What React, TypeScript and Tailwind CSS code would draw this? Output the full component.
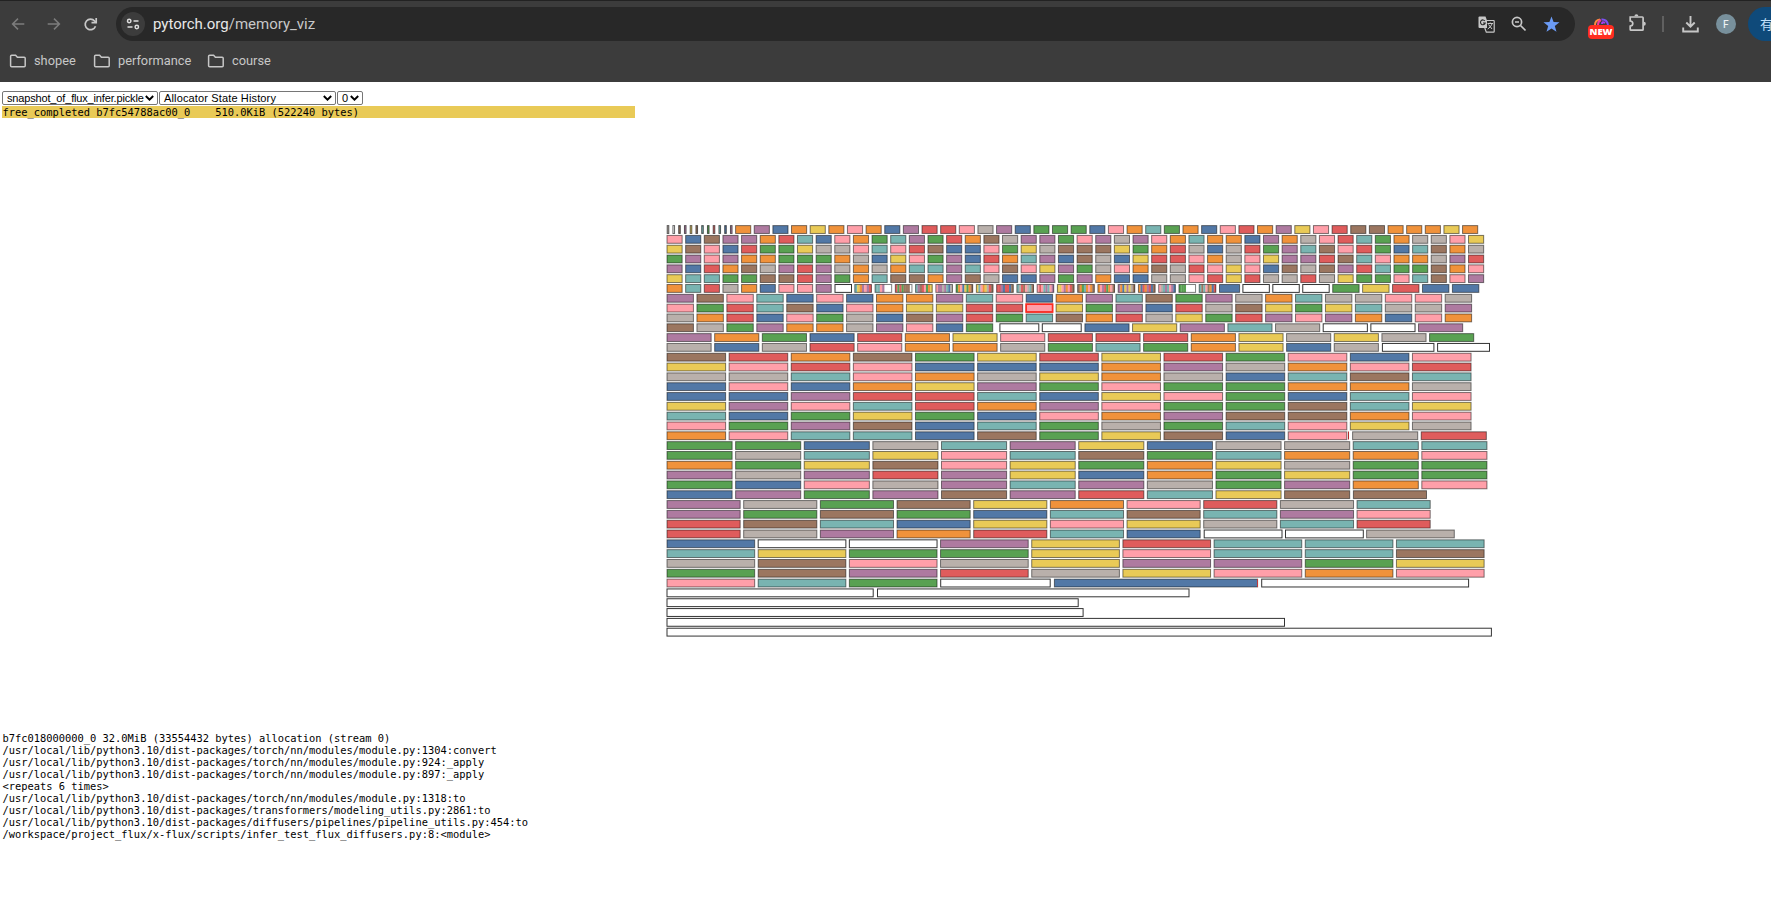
import React from "react";

const PALETTE: Record<string, string> = {
  B: "#5278a6",
  O: "#f0923b",
  R: "#df5c5c",
  T: "#79b4b1",
  G: "#59a152",
  Y: "#e9ca57",
  P: "#ae7aa0",
  K: "#ff9fa9",
  N: "#9b7660",
  A: "#b9b0ab",
  W: "#ffffff",
};

const X0 = 667;
const Y0 = 225.6;
const ROW = 9.82;
const HEIGHT = 7.86;
const GAP = 3.5;

// One run of equally sized blocks: [row, start x, pitch, colours]
type Run = [number, number, number, string];

const S = 18.64;
const M = 29.93;
const L = 47.66;
const XL = 62.12;
const X2 = 68.62;
const X3 = 76.67;
const X4 = 91.18;

const RUNS: Run[] = [
  [0, 735.6, S, "OPBOYOKOBPRRKAPBGGGBKOTGOBKROPYKRNNOOOYO"],
  [1, X0, S, "KBNPPORTBKOGTPGRONAPPGKPAPKOTOOBPOAKRTGOAAKY"],
  [2, X0, S, "YNKBRGGYAAKTKRNBBKGYANNNYGORABARGPTNKRGBTNOA"],
  [3, X0, S, "GPKPOOGGGOABYKGPBROTPBNABYRRKOAKYPPRNTKOOAPR"],
  [4, X0, S, "PBRONAPRPAOAOTTPTKNKYPGAKONARKYKBNANPRTGGNOK"],
  [5, X0, S, "YTTGGNNRPGOTNNOPNABBPGPOBBAAKRYRAARAYGGKTNKP"],
  [6, X0, S, "OTRAOBKKP"],
  [6, 835, 20, "W"],
  [6, 1219.5, 23.6, "B"],
  [6, 1242.9, M, "WWWGYRBB"],
  [7, X0, M, "PNKTBKBOOPTKBOPTNGPAOTAAKKA"],
  [8, X0, M, "KGRTNBKOYYRRKYGPBRANYGYTAAP"],
  [9, X0, M, "AORBKGABNPRGTNORAYGRPKPOBKO"],
  [10, X0, M, "NAGPOOAPKBG"],
  [10, 999.9, 42.4, "WW"],
  [10, 1084.9, L, "BYPTAWWP"],
  [11, X0, L, "POGBROYKRRROYAYAG"],
  [12, X0, L, "ABARKOOAGTGOYBA"],
  [12, 1382.4, 55, "W"],
  [12, 1437.6, 55.4, "W"],
  [13, X0, XL, "NRONGYRYRGKBK"],
  [14, X0, XL, "YKRKBBBOPAOKR"],
  [15, X0, XL, "AATKOAYOABTNT"],
  [16, X0, XL, "BKBOYPGKGGOOA"],
  [17, X0, XL, "BBPRRTBYKGBTK"],
  [18, X0, XL, "YPKTROPKGGNTY"],
  [19, X0, XL, "TBGYGBKOPNNOK"],
  [20, X0, XL, "KGPNBTGAGTKYA"],
  [21, X0, XL, "OKTTBNGYNBK"],
  [21, 1352.6, X2, "AR"],
  [22, X0, X2, "GGBATPYBAATT"],
  [23, X0, X2, "GATYKTNGTOOK"],
  [24, X0, X2, "OGYNKYGOYAGG"],
  [25, X0, X2, "PAPRPYBOGYGG"],
  [26, X0, X2, "GBKAPTPAGPOK"],
  [27, X0, X2, "BPGPNPRTYN"],
  [27, 1353.4, 76.6, "N"],
  [28, X0, X3, "PAGNYOKRAT"],
  [29, X0, X3, "PGNGBTNTPK"],
  [30, X0, X3, "RNTBYKYATR"],
  [31, X0, X3, "RAPORTB"],
  [31, 1204.2, 81.3, "WW"],
  [31, 1366.6, 91.2, "A"],
  [32, X0, X4, "BWWPYRTTT"],
  [33, X0, X4, "TYGGYKTTN"],
  [34, X0, X4, "ANKAYPPGY"],
  [35, X0, X4, "GNPRAYKOK"],
  [36, X0, X4, "KTG"],
  [36, 940.7, 113, "W"],
  [36, 1054.4, 206.7, "B"],
  [36, 1261.7, 210.4, "W"],
  [37, X0, 209.7, "W"],
  [37, 877.5, 315, "W"],
  [38, X0, 414.7, "W"],
  [39, X0, 419.6, "W"],
  [40, X0, 621, "W"],
  [41, X0, 827.9, "W"],
];

// Segments that hold many small blocks
const CLUSTERS = [
  "TYOPKPR", "TTKPWWW", "RGRGNNNW", "TPNRKGOY", "KPPAPTBA", "GOKBYGON",
  "YTKOYARN", "RRPBRRBN", "TARNKATN", "KRKTPTKP", "YYKPOKRN", "NOGTOKON",
  "OKPRGOKN", "POBYPYAN", "OBROPRBN", "KATPTKPB", "GGGWWWW", "TNTKNOBR",
];

const rowY = (row: number) => Y0 + row * ROW;

function MemoryMap() {
  return (
    <svg width="836" height="412" viewBox="665 224 836 412" className="block shrink-0 overflow-visible">
      {Array.from({ length: 12 }, (_, i) => (
        <rect
          key={i}
          x={667.2 + i * 5.75}
          y={rowY(0)}
          width={1.6}
          height={HEIGHT}
          fill={PALETTE["AWNPYNTGRTBP"[i]]}
          stroke="#222"
          strokeOpacity={0.7}
        />
      ))}
      {RUNS.map(([row, x, pitch, colours]) =>
        colours.split("").map((c, i) => (
          <rect
            key={`${row}-${x}-${i}`}
            x={x + i * pitch}
            y={rowY(row)}
            width={pitch - GAP}
            height={HEIGHT}
            fill={PALETTE[c]}
            stroke="#000"
            strokeOpacity={c === "W" ? 0.8 : 0.5}
          />
        ))
      )}
      {CLUSTERS.map((bands, i) => {
        const x = 854.8 + i * 20.26;
        const w = 16.6 / bands.length;
        return (
          <g key={i}>
            {bands.split("").map((c, j) => (
              <rect key={j} x={x + j * w} y={rowY(6)} width={w + 0.2} height={HEIGHT} fill={PALETTE[c]} />
            ))}
            <rect x={x} y={rowY(6)} width={16.6} height={HEIGHT} fill="none" stroke="#000" strokeOpacity={0.5} />
          </g>
        );
      })}
      <rect x={X0 + 12 * M} y={rowY(8)} width={M - GAP} height={HEIGHT} fill="none" stroke="#ff2a20" strokeWidth={1.7} />
      <path d="M1348.5 431.5v8" stroke="#b52a2a" />
      <path d="M1257.5 579v8" stroke="#c13a3a" />
    </svg>
  );
}

function Folder({ label, width }: { label: string; width: string }) {
  return (
    <div className={`flex items-center gap-[7px] ${width}`}>
      <svg className="shrink-0" width="18" height="14" viewBox="0 0 18 14" fill="none" stroke="#c7c7c7" strokeWidth="1.5">
        <path d="M1.6 2.2q0-1 1-1h4l1.8 2h6.8q1 0 1 1v7.6q0 1-1 1H2.6q-1 0-1-1z" />
      </svg>
      <span>{label}</span>
    </div>
  );
}

function Dropdown({ label, className }: { label: string; className: string }) {
  return (
    <div className={`flex h-[14px] items-center justify-between rounded-[2px] border border-[#767676] bg-white pl-[4px] pr-[3px] ${className}`}>
      <span className="whitespace-pre">{label}</span>
      <svg className="shrink-0" width="9" height="6" viewBox="0 0 9 6" fill="none" stroke="#000" strokeWidth="1.9">
        <path d="M.8 1l3.7 3.7L8.200 1" />
      </svg>
    </div>
  );
}

function Toolbar() {
  return (
    <header className="h-[82px] w-full overflow-hidden border-t border-[#222] bg-[#3c3c3c] font-[Inter,'Liberation_Sans',sans-serif]">
      <div className="flex h-[46px] items-center pl-[11px]">
        <svg className="shrink-0" width="14" height="14" viewBox="0 0 14 14" fill="none" stroke="#7c7c7c" strokeWidth="1.5">
          <path d="M13.300 7H1.800M7 1.600L1.600 7 7 12.400" />
        </svg>
        <svg className="ml-[22px] shrink-0" width="14" height="14" viewBox="0 0 14 14" fill="none" stroke="#7c7c7c" strokeWidth="1.5">
          <path d="M.7 7h11.500M7 1.600L12.400 7 7 12.400" />
        </svg>
        <svg className="ml-[22px] shrink-0" width="15" height="15" viewBox="0 0 15 15" fill="none" stroke="#c7c7c7" strokeWidth="1.700">
          <path d="M12.500 9.200A5.300 5.300 0 1 1 11.600 4l1.600 1.700" />
          <path d="M13.200 1v4.700H8.500" />
        </svg>
        <div className="ml-[18px] flex h-[34px] w-[1459px] shrink-0 items-center rounded-full bg-[#282828] pl-[5px]">
          <div className="flex h-6 w-6 shrink-0 items-center justify-center rounded-full bg-[#3c3c3c]">
            <svg width="14" height="12" viewBox="0 0 14 12" fill="none" stroke="#dedede" strokeWidth="1.5">
              <circle cx="3.200" cy="3" r="1.700" />
              <path d="M7.500 3h5M1.500 9h5" />
              <circle cx="10.800" cy="9" r="1.700" />
            </svg>
          </div>
          <div className="ml-[8px] w-[1325px] shrink-0 font-[Roboto,sans-serif] text-[15px] leading-5 text-[#c7c7c7]">
            <span className="text-[#e8e8e8]">pytorch.org</span>/memory_viz
          </div>
          <svg className="shrink-0" width="17" height="17" viewBox="0 0 17 17">
            <path d="M1.500.5h6l1.500 4V12H1.500Q.5 12 .5 11V1.500Q.5.5 1.500.5z" fill="#c7c7c7" />
            <path d="M8.500 4.500h7q.7 0 .7.7v10.300q0 .7-.7.7H8.300L6.800 12" fill="none" stroke="#c7c7c7" strokeWidth="1.200" />
            <path d="M6.900 5A2.400 2.400 0 1 0 7.200 7H5" fill="none" stroke="#282828" strokeWidth="1.100" />
            <path d="M9.500 7.500h5.500M12.200 6.500v1M10.500 8.500l3.500 4.500M14 8q-1 3-4.300 5" fill="none" stroke="#c7c7c7" strokeWidth="1" />
          </svg>
          <svg className="ml-[16px] shrink-0" width="16" height="16" viewBox="0 0 16 16" fill="none" stroke="#c7c7c7" strokeWidth="1.700">
            <circle cx="6" cy="6" r="4.600" />
            <path d="M9.500 9.500l5 5M4 6h4" />
          </svg>
          <svg className="ml-[16px] shrink-0" width="17" height="17" viewBox="0 0 17 17" fill="#6b9bf5">
            <path d="M8.500.5l2.100 5.600 5.900.2-4.700 3.700 1.700 5.800-5-3.400-5 3.400 1.700-5.800L.5 6.300l5.900-.2z" />
          </svg>
        </div>
        <div className="ml-[12px] flex w-[28px] shrink-0 flex-col items-center pt-[8px]">
          <svg width="15" height="7" viewBox="0 0 15 7" fill="none" strokeWidth="2">
            <path d="M1 7q0-5 5-5.500" stroke="#ff8a3c" />
            <path d="M4 7q0-4 3-5" stroke="#f03c9b" />
            <path d="M7.500 1.500Q13 1 14 7" stroke="#7a52f0" />
            <path d="M8 6q0-3 3-1" stroke="#a43cf0" />
          </svg>
          <div className="flex h-[14px] w-[26px] items-center justify-center rounded-[4px] bg-[#ff2c20] font-['Open_Sans',sans-serif] text-[9.500px] font-extrabold leading-none text-white">
            NEW
          </div>
        </div>
        <svg className="mb-[2px] ml-[13px] shrink-0" width="19" height="18" viewBox="0 0 19 18" fill="none" stroke="#c7c7c7" strokeWidth="1.700">
          <path d="M2.200 3h12.100q.8 0 .8.8v11.600q0 .8-.8.8H3q-.8 0-.8-.8v-3.200q2.600-.3 2.600-2.600T2.200 7z" />
          <path d="M6.400 2.300a2 2 0 0 1 4 0M15.800 7.700a2 2 0 0 1 0 4" fill="#c7c7c7" stroke="none" />
        </svg>
        <div className="ml-[15px] h-4 w-[2px] shrink-0 bg-[#606060]" />
        <svg className="ml-[18px] shrink-0" width="17" height="17" viewBox="0 0 17 17" fill="none" stroke="#c7c7c7" strokeWidth="1.900">
          <path d="M8.500 0v10.500M4.300 6.500l4.200 4.200 4.200-4.200M1.200 11.500v4h14.600v-4" />
        </svg>
        <div className="ml-[17px] flex h-5 w-5 shrink-0 items-center justify-center rounded-full bg-[#78909c] text-[10px] font-medium text-[#eef2f4]">F</div>
        <div className="ml-[12px] h-[34px] w-[60px] shrink-0 rounded-full bg-[#0f4a7a] pl-[12px] font-['Noto_Sans_CJK_SC',sans-serif] text-[13px] leading-[34px] text-[#c2e0fb]">
          有
        </div>
      </div>
      <div className="flex h-[28px] items-center pl-[9px] font-[Roboto,sans-serif] text-[12.800px] text-[#c7c7c7]">
        <Folder label="shopee" width="w-[84px]" />
        <Folder label="performance" width="w-[114px]" />
        <Folder label="course" width="w-[80px]" />
      </div>
    </header>
  );
}

const TRACE = [
  "b7fc018000000_0 32.0MiB (33554432 bytes) allocation (stream 0)",
  "/usr/local/lib/python3.10/dist-packages/torch/nn/modules/module.py:1304:convert",
  "/usr/local/lib/python3.10/dist-packages/torch/nn/modules/module.py:924:_apply",
  "/usr/local/lib/python3.10/dist-packages/torch/nn/modules/module.py:897:_apply",
  "<repeats 6 times>",
  "/usr/local/lib/python3.10/dist-packages/torch/nn/modules/module.py:1318:to",
  "/usr/local/lib/python3.10/dist-packages/transformers/modeling_utils.py:2861:to",
  "/usr/local/lib/python3.10/dist-packages/diffusers/pipelines/pipeline_utils.py:454:to",
  "/workspace/project_flux/x-flux/scripts/infer_test_flux_diffusers.py:8:<module>",
];

export default function App() {
  return (
    <div className="flex h-[901px] w-[1771px] flex-col overflow-hidden bg-white text-black">
      <Toolbar />
      <main className="flex flex-col pl-[2px] pt-[9px]">
        <div className="flex gap-px font-['Liberation_Sans',Arial,sans-serif] text-[11px] leading-3">
          <Dropdown label="snapshot_of_flux_infer.pickle" className="w-[156px] tracking-[-0.16px]" />
          <Dropdown label="Allocator State History" className="w-[177px] tracking-[0.14px]" />
          <Dropdown label="0" className="w-[26px]" />
        </div>
        <div className="mt-px flex h-[620px] items-start">
          <div className="h-[12px] w-[633px] whitespace-pre bg-[#e9ca57] pl-[0.500px] font-['DejaVu_Sans_Mono',monospace] text-[10.400px] leading-[12px]">
            {"free_completed b7fc54788ac00_0    510.0KiB (522240 bytes)"}
          </div>
          <div className="pl-[30px] pt-[118px]">
            <MemoryMap />
          </div>
        </div>
        <pre className="mt-[6px] pl-[0.500px] font-['DejaVu_Sans_Mono',monospace] text-[10.400px] leading-[12.040px]">{TRACE.join("\n")}</pre>
      </main>
    </div>
  );
}
